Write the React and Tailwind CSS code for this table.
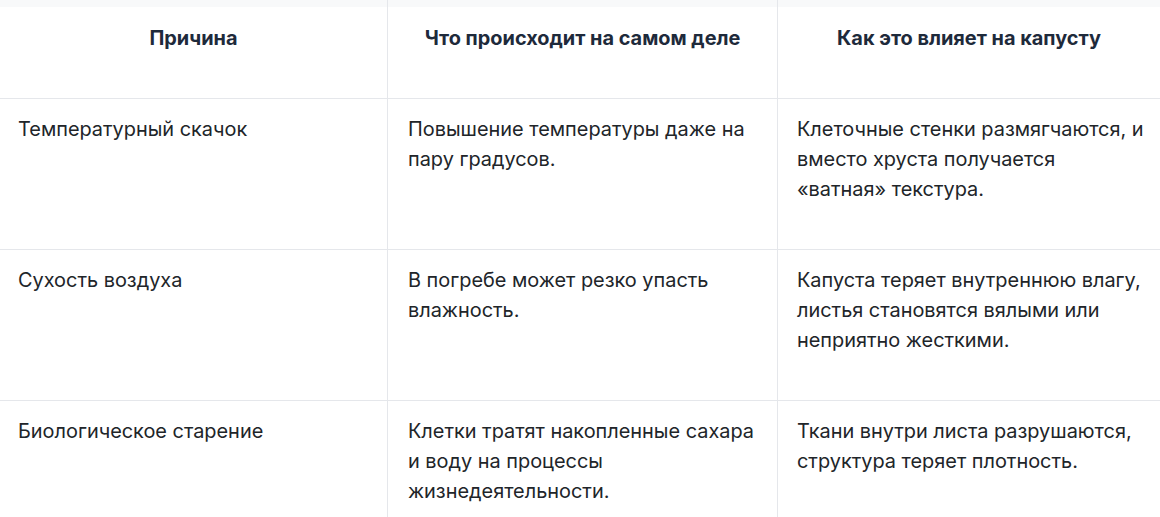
import React from "react";

const rows = [
  {
    cause: "Температурный скачок",
    what: "Повышение температуры даже на пару градусов.",
    effect: "Клеточные стенки размягчаются, и вместо хруста получается «ватная» текстура.",
  },
  {
    cause: "Сухость воздуха",
    what: "В погребе может резко упасть влажность.",
    effect: "Капуста теряет внутреннюю влагу, листья становятся вялыми или неприятно жесткими.",
  },
  {
    cause: "Биологическое старение",
    what: "Клетки тратят накопленные сахара и воду на процессы жизнедеятельности.",
    effect: "Ткани внутри листа разрушаются, структура теряет плотность.",
  },
];

const headers = ["Причина", "Что происходит на самом деле", "Как это влияет на капусту"];

const App = () => {
  return (
    <div
      className="w-[1160px] h-[517px] overflow-hidden bg-white text-[19.9px] leading-[30px] text-[#212529]"
      style={{ fontFamily: "Inter, 'Noto Sans', sans-serif" }}
    >
      <div className="grid grid-cols-[388px_390px_1fr]">
        {/* tail of the row above */}
        <div className="h-[7px] bg-[#f8f9fa] border-r border-[#e5e7eb]"></div>
        <div className="h-[7px] bg-[#f8f9fa] border-r border-[#e5e7eb]"></div>
        <div className="h-[7px] bg-[#f8f9fa]"></div>

        {headers.map((h, i) => (
          <div
            key={h}
            className={`h-[92px] pt-[16px] px-[19px] text-center font-bold text-[#1e2a3b] border-b border-[#e5e7eb] ${
              i < 2 ? "border-r" : ""
            }`}
          >
            {h}
          </div>
        ))}

        {rows.map((row, r) => (
          <React.Fragment key={r}>
            <div className="h-[151px] pt-[15px] pl-[18px] pr-[19px] border-r border-b border-[#e5e7eb]">
              {row.cause}
            </div>
            <div className="h-[151px] pt-[15px] pl-[20px] pr-[19px] border-r border-b border-[#e5e7eb]">
              {row.what}
            </div>
            <div className="h-[151px] pt-[15px] pl-[19px] pr-[12px] border-b border-[#e5e7eb]">
              {row.effect}
            </div>
          </React.Fragment>
        ))}
      </div>
    </div>
  );
};

export default App;
